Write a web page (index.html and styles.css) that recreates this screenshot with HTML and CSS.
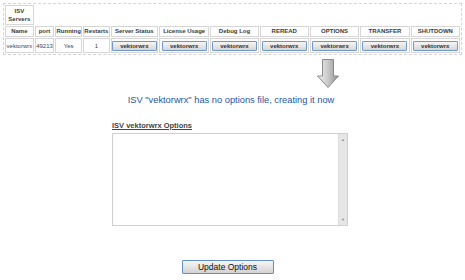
FILE: index.html
```html
<!DOCTYPE html>
<html>

<head>
  <meta charset="utf-8">
  <meta name="viewport" content="width=device-width">
  <title>ISV Servers - Options</title>
  <link rel="stylesheet" href="styles.css">
</head>

<body>

  <table class="servers">
    <colgroup>
      <col style="width: 28px">
      <col style="width: 19px">
      <col style="width: 26px">
      <col style="width: 26px">
      <col style="width: 46px">
      <col style="width: 49px">
      <col style="width: 47px">
      <col style="width: 48px">
      <col style="width: 48px">
      <col style="width: 48px">
      <col style="width: 48px">
    </colgroup>
    <tr class="title-row">
      <th class="title">ISV<br>Servers</th>
      <td class="blank" colspan="10"></td>
    </tr>
    <tr class="head-row">
      <th>Name</th>
      <th>port</th>
      <th>Running</th>
      <th>Restarts</th>
      <th>Server Status</th>
      <th>License Usage</th>
      <th>Debug Log</th>
      <th>REREAD</th>
      <th>OPTIONS</th>
      <th>TRANSFER</th>
      <th>SHUTDOWN</th>
    </tr>
    <tr class="data-row">
      <td>vektorwrx</td>
      <td>49213</td>
      <td>Yes</td>
      <td>1</td>
      <td><button class="isv-btn">vektorwrx</button></td>
      <td><button class="isv-btn">vektorwrx</button></td>
      <td><button class="isv-btn">vektorwrx</button></td>
      <td><button class="isv-btn">vektorwrx</button></td>
      <td><button class="isv-btn">vektorwrx</button></td>
      <td><button class="isv-btn">vektorwrx</button></td>
      <td><button class="isv-btn">vektorwrx</button></td>
    </tr>
  </table>

  <!-- arrow pointing at the OPTIONS column -->
  <div class="arrow-row">
    <svg width="24" height="30" viewBox="0 0 24 30">
      <defs>
        <linearGradient id="arrowFill" x1="0" y1="0" x2="1" y2="0">
          <stop offset="0" stop-color="#f2f2f2" />
          <stop offset="0.5" stop-color="#c9c9c9" />
          <stop offset="1" stop-color="#8f8f8f" />
        </linearGradient>
      </defs>
      <polygon points="6.5,0.5 17.5,0.5 17.5,17 22.5,17 12,28.5 1.5,17 6.5,17"
        fill="url(#arrowFill)" stroke="#8a8a8a" stroke-width="1" />
    </svg>
  </div>

  <p class="message">ISV "vektorwrx" has no options file, creating it now</p>

  <div class="options">
    <div class="options-label">ISV vektorwrx Options</div>
    <div class="editor">
      <textarea class="editor-text"></textarea>
      <div class="scroll">
        <span>&#9650;</span>
        <span>&#9660;</span>
      </div>
    </div>
  </div>

  <div class="actions">
    <button class="update-btn">Update Options</button>
  </div>

</body>

</html>
```

FILE: styles.css
```css
body {
  font-family: 'Liberation Sans', Arial, sans-serif;
  margin: 0;
  padding: 3px 3px 0;
  background: #ffffff;
  color: #333333;
}

.servers {
  width: 459px;
  table-layout: fixed;
  border: 1px dashed #d4d4d4;
  border-collapse: separate;
  border-spacing: 1px;
  font-size: 6px;
}

.servers th,
.servers td {
  border: 1px solid #d6d6d6;
  padding: 0;
  text-align: center;
  overflow: hidden;
  white-space: nowrap;
}

.servers th {
  font-weight: bold;
  color: #3a3a3a;
}

.servers td.blank {
  border: none;
}

.title-row th {
  height: 18px;
  line-height: 8px;
}

.head-row th {
  height: 9px;
  line-height: 9px;
}

.data-row td {
  height: 13px;
  color: #444444;
}

.isv-btn {
  width: 45px;
  height: 10px;
  padding: 0;
  margin: 0;
  font-family: 'Liberation Sans', Arial, sans-serif;
  font-size: 6px;
  font-weight: bold;
  color: #333333;
  background: linear-gradient(#f6f6f6, #d6d6d6);
  border: 1px solid #6f98c8;
  border-radius: 1px;
  cursor: pointer;
}

.arrow-row {
  padding: 4px 0 0 313px;
  height: 31px;
}

.message {
  margin: 5px 0 0;
  text-align: center;
  font-size: 9.3px;
  color: #2558a3;
  padding-right: 3px;
}

.options {
  width: 236px;
  margin: 16px 0 0 109px;
}

.options-label {
  font-size: 7.5px;
  font-weight: bold;
  color: #444444;
  text-decoration: underline;
  margin-bottom: 3px;
}

.editor {
  display: flex;
  height: 91px;
  border: 1px solid #cfcfcf;
}

.editor-text {
  flex: 1;
  border: none;
  resize: none;
  outline: none;
  padding: 0;
  margin: 0;
}

.scroll {
  width: 8px;
  background: #e6e6e6;
  border-left: 1px solid #dcdcdc;
  display: flex;
  flex-direction: column;
  justify-content: space-between;
  align-items: center;
  font-size: 4px;
  color: #8a8a8a;
  padding: 3px 0;
}

.actions {
  margin-top: 30px;
  text-align: center;
  padding-right: 10px;
}

.update-btn {
  width: 92px;
  height: 14px;
  padding: 0;
  font-family: 'Liberation Sans', Arial, sans-serif;
  font-size: 8.5px;
  color: #111111;
  background: linear-gradient(#f6f6f6, #d2d2d2);
  border: 1px solid #5f8fc6;
  border-radius: 1px;
  cursor: pointer;
}
```
